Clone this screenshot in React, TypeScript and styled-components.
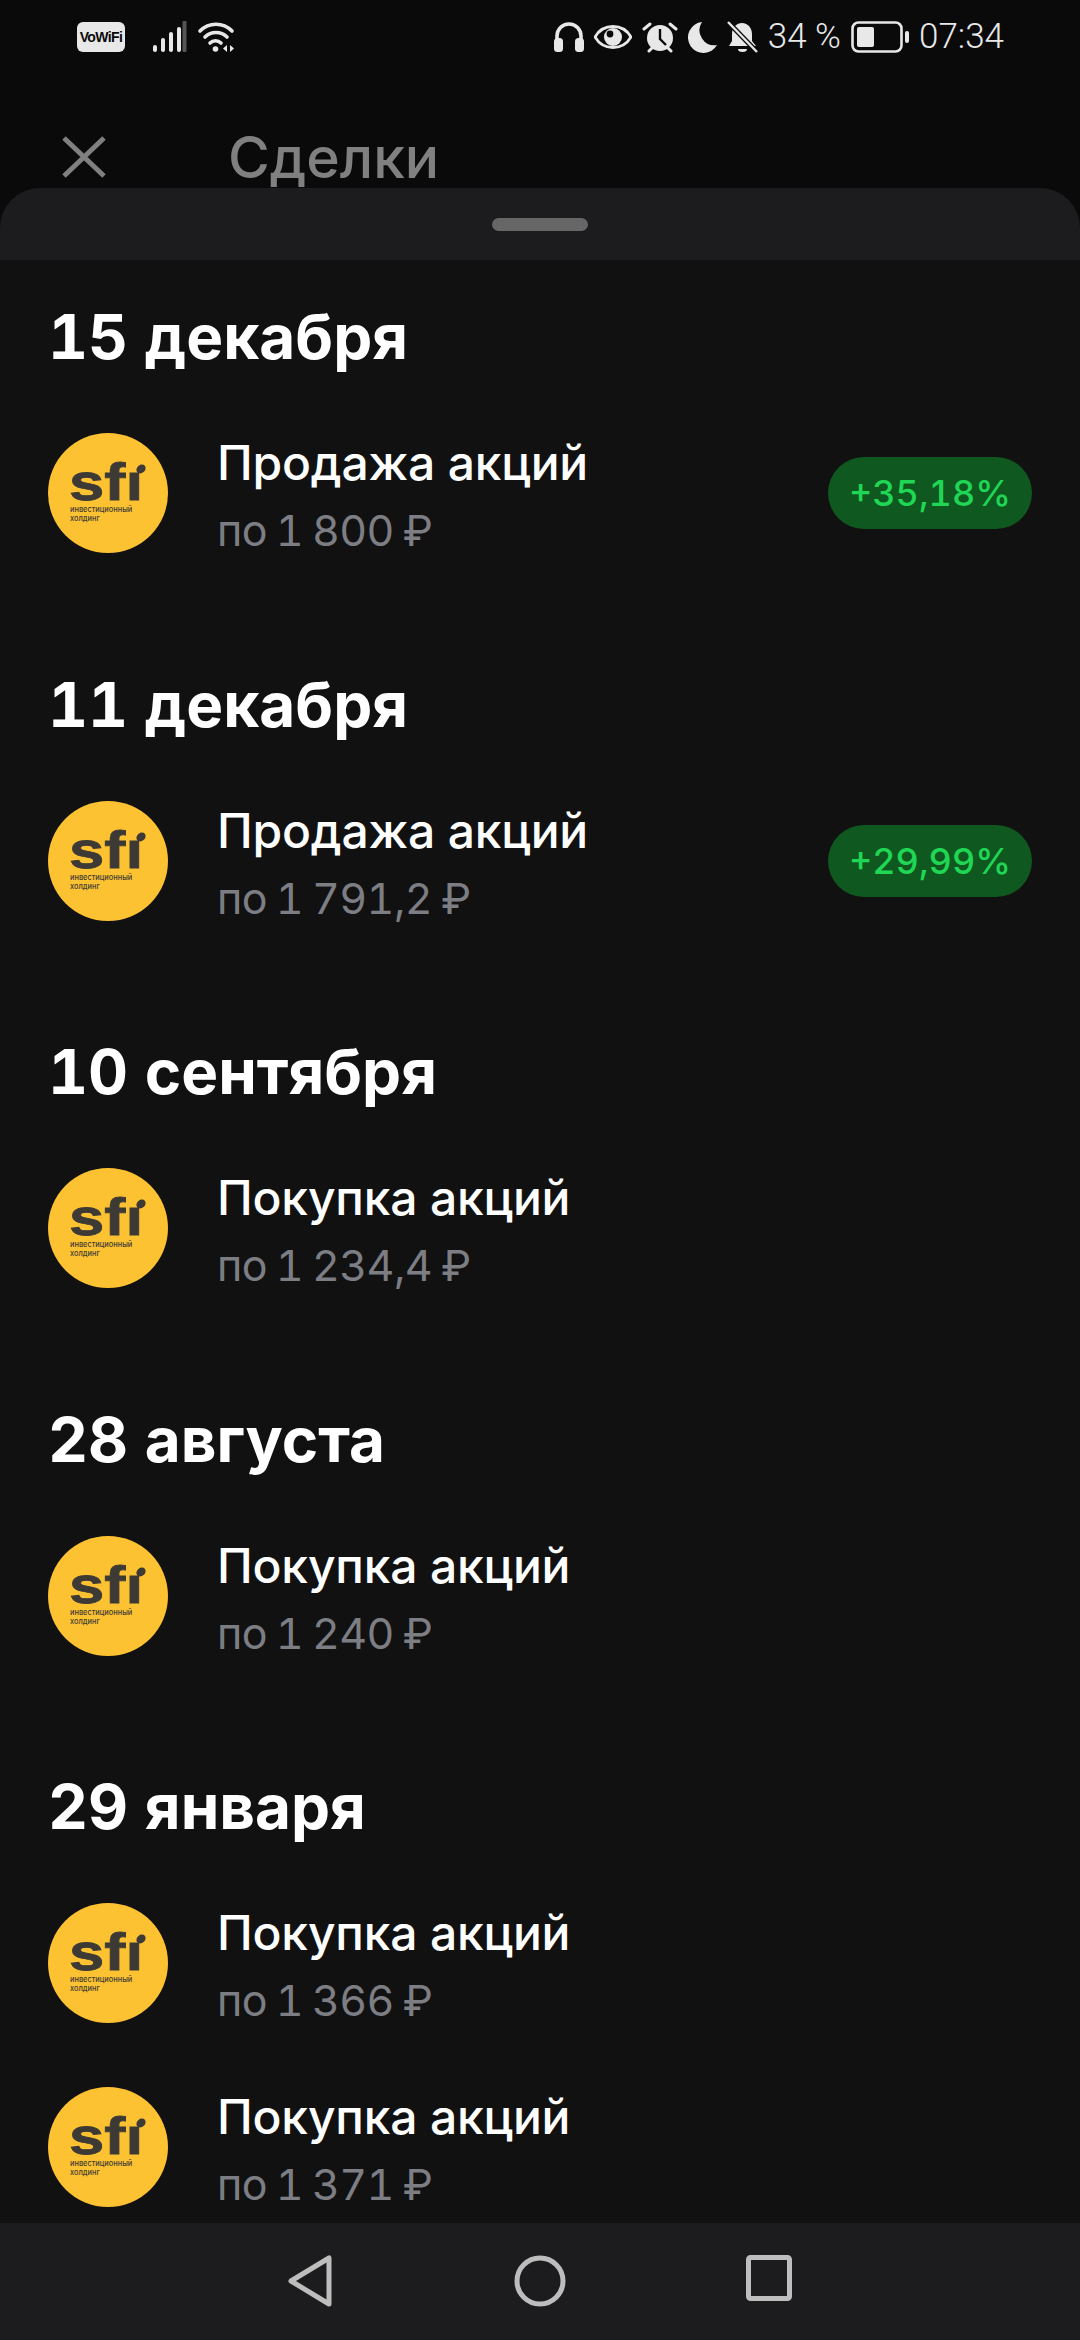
import React from "react";
import styled, { createGlobalStyle } from "styled-components";

const Global = createGlobalStyle`
  html, body { margin: 0; padding: 0; background: #0a0a0a; }
  * { box-sizing: border-box; }
`;

const Page = styled.div`
  width: 1080px;
  height: 2340px;
  display: flex;
  flex-direction: column;
  overflow: hidden;
  background: #0a0a0a;
  font-family: Inter, "Noto Sans", sans-serif;
  font-variant-numeric: tabular-nums;
`;

const StatusBar = styled.div`
  height: 72px;
  flex: none;
  display: flex;
  align-items: flex-start;
  justify-content: space-between;
  padding: 21px 76px 0 77px;
  color: #e8e8e8;
`;

const StatusGroup = styled.div<{ $gap: number }>`
  display: flex;
  align-items: center;
  height: 32px;
  gap: ${(p) => p.$gap}px;
`;

const VoWifi = styled.div`
  width: 48px;
  height: 30px;
  border-radius: 6px;
  background: #e8e8e8;
  color: #0a0a0a;
  font: 700 14px/30px "Liberation Sans", sans-serif;
  letter-spacing: -0.6px;
  text-align: center;
  margin-right: 18px;
`;

const StatusText = styled.span`
  font-family: Roboto, Inter, sans-serif;
  font-size: 35px;
  font-weight: 300;
  line-height: 32px;
  white-space: nowrap;
`;

const TopBar = styled.div`
  height: 116px;
  flex: none;
  overflow: hidden;
  display: flex;
  align-items: flex-start;
  padding: 63px 0 0 62px;
  color: #808080;
`;

const Title = styled.div`
  margin-left: 122px;
  margin-top: -11px;
  font-size: 57px;
  line-height: 68px;
  font-weight: 500;
`;

const Sheet = styled.div`
  flex: 1;
  min-height: 0;
  display: flex;
  flex-direction: column;
  background: #111112;
  border-radius: 40px 40px 0 0;
  overflow: hidden;
`;

const SheetHead = styled.div`
  height: 72px;
  flex: none;
  background: #1c1c1e;
  display: flex;
  justify-content: center;
  padding-top: 30px;
`;

const Handle = styled.div`
  width: 96px;
  height: 13px;
  border-radius: 7px;
  background: #666667;
`;

const List = styled.div`
  flex: 1;
  min-height: 0;
  overflow: hidden;
  padding: 0 48px;
`;

const Section = styled.section`
  height: 367.5px;
  padding-top: 38px;
`;

const LastSection = styled.section`
  padding-top: 38px;
`;

const DateHead = styled.h2`
  margin: 0 0 57px;
  height: 78px;
  color: #fff;
  font-size: 62px;
  line-height: 78px;
  font-weight: 700;
`;

const Row = styled.div`
  height: 183.5px;
  display: flex;
  align-items: flex-start;
`;

const Avatar = styled.svg`
  width: 120px;
  height: 120px;
  flex: none;
`;

const RowText = styled.div`
  margin-left: 49px;
  flex: 1;
`;

const RowTitle = styled.div`
  color: #fff;
  font-size: 48px;
  line-height: 60px;
  font-weight: 500;
  letter-spacing: -0.2px;
`;

const RowSub = styled.div`
  margin-top: 7px;
  color: #7c7e84;
  font-size: 43px;
  line-height: 60px;
  font-weight: 400;
  letter-spacing: -0.6px;
  word-spacing: -2px;
`;

const Badge = styled.div`
  flex: none;
  width: 204px;
  height: 72px;
  margin-top: 24px;
  border-radius: 36px;
  background: #0f581f;
  color: #1fd655;
  font-size: 36px;
  line-height: 72px;
  font-weight: 500;
  text-align: center;
`;

const NavBar = styled.div`
  height: 117px;
  flex: none;
  background: #1c1c1e;
  display: flex;
  justify-content: center;
  align-items: flex-start;
  gap: 180px;
  padding-top: 32px;
  color: #bdbdbd;
`;

const Logo = () => (
  <Avatar viewBox="0 0 120 120">
    <circle cx="60" cy="60" r="60" fill="#fdc232" />
    <text x="21" y="67" fontFamily="'Liberation Sans', sans-serif" fontWeight="700" fontSize="52" fill="#3d3a36" stroke="#3d3a36" strokeWidth="0.8" textLength="74" lengthAdjust="spacingAndGlyphs">sfı</text>
    <ellipse cx="93" cy="36" rx="5" ry="4" fill="#3d3a36" transform="rotate(-40 93 36)" />
    <text x="22" y="79" fontFamily="Inter, sans-serif" fontWeight="500" fontSize="7.4" fill="#3d3a36">инвестиционный</text>
    <text x="22" y="88" fontFamily="Inter, sans-serif" fontWeight="500" fontSize="7.4" fill="#3d3a36">холдинг</text>
  </Avatar>
);

const Signal = () => (
  <svg width="34" height="32" viewBox="0 0 34 32" fill="currentColor">
    <rect x="0" y="24" width="4" height="7" rx="2" />
    <rect x="8" y="17" width="4" height="14" rx="2" />
    <rect x="16" y="11" width="4" height="20" rx="2" />
    <rect x="24" y="6" width="4" height="25" rx="2" />
    <rect x="29.5" y="0" width="4" height="31" rx="1" fill="#555" />
  </svg>
);

const Wifi = () => (
  <svg width="40" height="32" viewBox="0 0 38 32" fill="none" stroke="currentColor" strokeWidth="3.6" strokeLinecap="round">
    <path d="M2 10C11 1 25 1 34 10" />
    <path d="M7 16C13 10 23 10 29 16" />
    <path d="M12 22C15 19 20 19 23 22" />
    <circle cx="17.5" cy="28" r="2.8" fill="currentColor" stroke="none" />
    <path d="M29 24v7l-4-3.5zM32 24v7l4-3.5z" fill="currentColor" stroke="none" />
  </svg>
);

const Headphones = () => (
  <svg width="30" height="32" viewBox="0 0 30 32" fill="none" stroke="currentColor" strokeWidth="3.6">
    <path d="M3 22V15a12 12 0 0 1 24 0v7" />
    <rect x="0" y="17" width="9" height="14" rx="3.5" fill="currentColor" stroke="none" />
    <rect x="21" y="17" width="9" height="14" rx="3.5" fill="currentColor" stroke="none" />
  </svg>
);

const Eye = () => (
  <svg width="38" height="26" viewBox="0 0 38 26">
    <path d="M1 13C9 -1 29 -1 37 13C29 27 9 27 1 13Z" fill="none" stroke="currentColor" strokeWidth="2.8" />
    <circle cx="19" cy="13" r="9" fill="currentColor" />
    <circle cx="16" cy="10" r="3.4" fill="#0a0a0a" />
  </svg>
);

const Alarm = () => (
  <svg width="36" height="32" viewBox="0 0 36 32">
    <circle cx="18" cy="17" r="13" fill="currentColor" />
    <path d="M18 8v10l6 6" fill="none" stroke="#0a0a0a" strokeWidth="2.4" />
    <path d="M2 8L8 3M34 8L28 3M7 30l3-3M29 30l-3-3" stroke="currentColor" strokeWidth="3" strokeLinecap="round" />
  </svg>
);

const Moon = () => (
  <svg width="29" height="32" viewBox="0 0 29 32">
    <path d="M14 1A15.5 15.5 0 1 0 29 24A15 15 0 0 1 14 1Z" fill="currentColor" />
  </svg>
);

const BellOff = () => (
  <svg width="31" height="32" viewBox="0 0 31 32">
    <path d="M15 2c6 0 10 5 10 11v7l4 5H2l3-5v-7c0-6 4-11 10-11Z" fill="currentColor" />
    <path d="M11 28a4.5 3 0 0 0 9 0Z" fill="currentColor" />
    <path d="M1 1L30 31" stroke="#0a0a0a" strokeWidth="5" />
    <path d="M1 1L30 31" stroke="currentColor" strokeWidth="2.4" />
  </svg>
);

const Battery = () => (
  <svg width="58" height="32" viewBox="0 0 58 32">
    <rect x="1.5" y="1.5" width="49" height="29" rx="6" fill="none" stroke="currentColor" strokeWidth="2.6" />
    <rect x="6" y="6" width="17" height="20" rx="2" fill="currentColor" />
    <rect x="54" y="10" width="4" height="12" rx="2" fill="currentColor" />
  </svg>
);

type Deal = { title: string; price: string; gain?: string };
const sections: { date: string; deals: Deal[] }[] = [
  { date: "15 декабря", deals: [{ title: "Продажа акций", price: "по 1 800 ₽", gain: "+35,18%" }] },
  { date: "11 декабря", deals: [{ title: "Продажа акций", price: "по 1 791,2 ₽", gain: "+29,99%" }] },
  { date: "10 сентября", deals: [{ title: "Покупка акций", price: "по 1 234,4 ₽" }] },
  { date: "28 августа", deals: [{ title: "Покупка акций", price: "по 1 240 ₽" }] },
];
const last = {
  date: "29 января",
  deals: [
    { title: "Покупка акций", price: "по 1 366 ₽" },
    { title: "Покупка акций", price: "по 1 371 ₽" },
  ] as Deal[],
};

const DealRow = ({ deal }: { deal: Deal }) => (
  <Row>
    <Logo />
    <RowText>
      <RowTitle>{deal.title}</RowTitle>
      <RowSub>{deal.price}</RowSub>
    </RowText>
    {deal.gain && <Badge>{deal.gain}</Badge>}
  </Row>
);

export default function App() {
  return (
    <Page>
      <Global />
      <StatusBar>
        <StatusGroup $gap={10}>
          <VoWifi>VoWiFi</VoWifi>
          <Signal />
          <Wifi />
        </StatusGroup>
        <StatusGroup $gap={10}>
          <Headphones />
          <Eye />
          <Alarm />
          <Moon />
          <BellOff />
          <StatusText>34 %</StatusText>
          <Battery />
          <StatusText>07:34</StatusText>
        </StatusGroup>
      </StatusBar>
      <TopBar>
        <svg width="44" height="44" viewBox="0 0 44 44" stroke="currentColor" strokeWidth="5" fill="none">
          <path d="M2 3L42 41M42 3L2 41" />
        </svg>
        <Title>Сделки</Title>
      </TopBar>
      <Sheet>
        <SheetHead>
          <Handle />
        </SheetHead>
        <List>
          {sections.map((s) => (
            <Section key={s.date}>
              <DateHead>{s.date}</DateHead>
              {s.deals.map((d, i) => (
                <DealRow key={i} deal={d} />
              ))}
            </Section>
          ))}
          <LastSection>
            <DateHead>{last.date}</DateHead>
            {last.deals.map((d, i) => (
              <DealRow key={i} deal={d} />
            ))}
          </LastSection>
        </List>
        <NavBar>
          <svg width="46" height="52" viewBox="0 0 46 52" fill="none" stroke="currentColor" strokeWidth="5" strokeLinejoin="round">
            <path d="M41 3V49L3 26Z" />
          </svg>
          <svg width="52" height="52" viewBox="0 0 52 52" fill="none" stroke="currentColor" strokeWidth="5">
            <circle cx="26" cy="26" r="23" />
          </svg>
          <svg width="46" height="46" viewBox="0 0 46 46" fill="none" stroke="currentColor" strokeWidth="5" strokeLinejoin="round">
            <rect x="2.5" y="2.5" width="41" height="41" rx="2" />
          </svg>
        </NavBar>
      </Sheet>
    </Page>
  );
}
